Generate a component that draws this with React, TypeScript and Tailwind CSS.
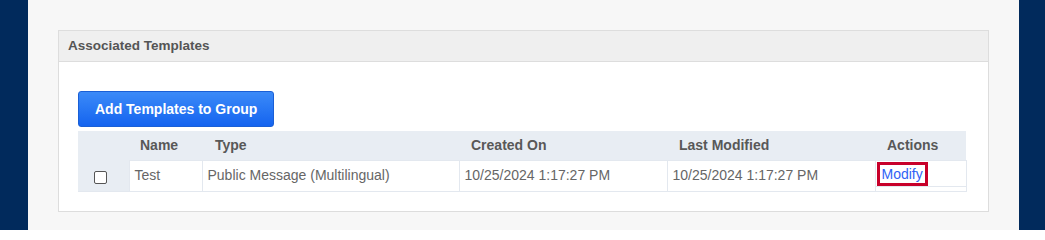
import React from 'react'

type Row = {
  name: string
  type: string
  createdOn: string
  lastModified: string
}

const rows: Row[] = [
  {
    name: 'Test',
    type: 'Public Message (Multilingual)',
    createdOn: '10/25/2024 1:17:27 PM',
    lastModified: '10/25/2024 1:17:27 PM',
  },
]

export default function App() {
  return (
    <div className="flex h-[230px] w-[1045px] overflow-hidden font-['Liberation_Sans',Arial,sans-serif]">
      <div className="w-[28px] shrink-0 bg-[#012a5c]" />

      <div className="flex-1 bg-[#f7f7f7] px-[30px] pt-[30px]">
        <div className="border border-[#dddddd] bg-white">
          <div className="flex h-[31px] items-center border-b border-[#dddddd] bg-[#efefef] px-[9px] text-[13.5px] font-bold text-[#555]">
            Associated Templates
          </div>

          <div className="pb-[19px] pl-[19px] pr-[21px] pt-[29px]">
            <button className="h-[36px] rounded-[3px] border border-[#1a5fd6] bg-gradient-to-b from-[#3b8af8] to-[#1463ef] px-[16px] text-[14px] font-bold text-white">
              Add Templates to Group
            </button>

            <table className="mt-[4px] w-[888px] table-fixed border-collapse text-[14px]">
              <colgroup>
                <col className="w-[51px]" />
                <col className="w-[73px]" />
                <col className="w-[257px]" />
                <col className="w-[208px]" />
                <col className="w-[208px]" />
                <col className="w-[91px]" />
              </colgroup>
              <thead>
                <tr className="h-[29px] bg-[#e8edf3] text-left font-bold text-[#585858]">
                  <th />
                  <th className="pl-[11px] font-bold">Name</th>
                  <th className="pl-[13px] font-bold">Type</th>
                  <th className="pl-[12px] font-bold">Created On</th>
                  <th className="pl-[12px] font-bold">Last Modified</th>
                  <th className="pl-[12px] font-bold">Actions</th>
                </tr>
              </thead>
              <tbody>
                {rows.map((r) => (
                  <tr key={r.name} className="h-[31px] text-[#666]">
                    <td className="border-b border-[#e3e8ef] bg-[#e8edf3] text-center align-middle">
                      <input
                        type="checkbox"
                        className="h-[13px] w-[13px] translate-x-[-3px] translate-y-[1px] appearance-none rounded-[2px] border border-[#555] bg-white align-middle"
                      />
                    </td>
                    <td className="border border-[#e3e8ef] pl-[5px]">{r.name}</td>
                    <td className="border border-[#e3e8ef] pl-[5px]">{r.type}</td>
                    <td className="border border-[#e3e8ef] pl-[5px]">{r.createdOn}</td>
                    <td className="border border-[#e3e8ef] pl-[5px]">{r.lastModified}</td>
                    <td className="border border-[#e3e8ef] p-0 align-top">
                      <div className="flex h-[26px] items-end border-b border-[#e3e8ef] pl-[1px]">
                        <a
                          href="#"
                          className="border-[3px] border-[#c8002a] bg-white px-[2px] leading-[18px] text-[#2f63f5]"
                        >
                          Modify
                        </a>
                      </div>
                    </td>
                  </tr>
                ))}
              </tbody>
            </table>
          </div>
        </div>
      </div>

      <div className="w-[27px] shrink-0 bg-[#012a5c]" />
    </div>
  )
}
